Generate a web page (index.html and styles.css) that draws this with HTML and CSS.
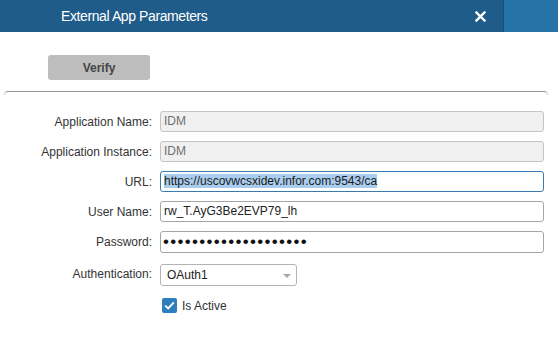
FILE: index.html
```html
<!DOCTYPE html>
<html lang="en">
<head>
  <meta charset="UTF-8">
  <meta name="viewport" content="width=device-width, initial-scale=1.0">
  <title>External App Parameters</title>
  <link rel="stylesheet" href="styles.css">
</head>
<body>

  <div class="dialog">
    <div class="titlebar">
      <div class="title">External App Parameters</div>
      <div class="close">
        <svg width="11" height="11" viewBox="0 0 11 11">
          <path d="M1.5 1.5 L9.5 9.5 M9.5 1.5 L1.5 9.5" stroke="#fff" stroke-width="2.4" stroke-linecap="square"/>
        </svg>
      </div>
      <div class="side"></div>
    </div>

    <div class="toolbar">
      <button class="btn-verify">Verify</button>
    </div>

    <div class="panel">
      <div class="panel-line"></div>

      <div class="form">
        <label class="label">Application Name:</label>
        <div class="field disabled">IDM</div>

        <label class="label">Application Instance:</label>
        <div class="field disabled">IDM</div>

        <label class="label">URL:</label>
        <div class="field focused"><span class="selected">https://uscovwcsxidev.infor.com:9543/ca</span></div>

        <label class="label">User Name:</label>
        <div class="field">rw_T.AyG3Be2EVP79_lh</div>

        <label class="label">Password:</label>
        <div class="field password">&#8226;&#8226;&#8226;&#8226;&#8226;&#8226;&#8226;&#8226;&#8226;&#8226;&#8226;&#8226;&#8226;&#8226;&#8226;&#8226;&#8226;&#8226;&#8226;&#8226;</div>

        <label class="label">Authentication:</label>
        <div class="select-wrap">
          <div class="select">OAuth1<span class="arrow"></span></div>
        </div>

        <div></div>
        <div class="check-row">
          <span class="checkbox">
            <svg width="11" height="9" viewBox="0 0 11 9">
              <path d="M1.2 4.6 L4.2 7.4 L9.8 1.4" fill="none" stroke="#fff" stroke-width="1.9"/>
            </svg>
          </span>
          <span class="check-label">Is Active</span>
        </div>
      </div>
    </div>
  </div>

</body>
</html>
```

FILE: styles.css
```css
body {
  margin: 0;
  font-family: "Liberation Sans", Arial, sans-serif;
  background: #fff;
  color: #333;
}

.dialog {
  width: 558px;
  height: 342px;
  background: #fff;
}

/* title bar */
.titlebar {
  display: flex;
  height: 32px;
  background: #1f5c89;
}

.title {
  flex: 1;
  padding-left: 61px;
  line-height: 32px;
  font-size: 14px;
  letter-spacing: -0.4px;
  color: #fff;
}

.close {
  width: 45px;
  display: flex;
  align-items: center;
  justify-content: center;
  padding-top: 1px;
}

.side {
  width: 54px;
  background: #2673a8;
  border-left: 1px solid #1a5078;
}

/* verify button */
.toolbar {
  padding: 23px 0 0 48px;
}

.btn-verify {
  width: 102px;
  height: 25px;
  border: none;
  border-radius: 3px;
  background: #bdbdbd;
  color: #444;
  font-family: "Liberation Sans", Arial, sans-serif;
  font-size: 12px;
  font-weight: bold;
  padding: 0;
}

/* form panel */
.panel {
  margin: 11px 0 0 4px;
  width: 544px;
}

.panel-line {
  height: 3px;
  border: 1px solid #999;
  border-bottom: none;
  border-radius: 5px 5px 0 0;
  border-left-color: #c8c8c8;
  border-right-color: #c8c8c8;
}

.form {
  display: grid;
  grid-template-columns: 148px 384px;
  column-gap: 8px;
  row-gap: 9px;
  margin-top: 16px;
  align-items: center;
}

.label {
  text-align: right;
  font-size: 12px;
  color: #333;
}

.field {
  box-sizing: border-box;
  height: 21px;
  line-height: 19px;
  padding: 0 3px;
  border: 1px solid #a6a6a6;
  border-radius: 3px;
  font-size: 12px;
  color: #222;
  background: #fff;
  white-space: nowrap;
  overflow: hidden;
}

.field.disabled {
  background: #f0f0f0;
  border-color: #c4c4c4;
  color: #6f6f6f;
}

.field.focused {
  border-color: #3b79b1;
}

.selected {
  background: #a9cdee;
  color: #1a1a1a;
}

.field.password {
  height: 22px;
  font-size: 17px;
  line-height: 19px;
  letter-spacing: 1.3px;
  padding-left: 2px;
  color: #111;
}

.select-wrap {
  margin-top: 2px;
}

.select {
  position: relative;
  box-sizing: border-box;
  width: 137px;
  height: 22px;
  line-height: 20px;
  padding: 0 6px;
  border: 1px solid #b4b4b4;
  border-radius: 3px;
  font-size: 12px;
  color: #222;
}

.arrow {
  position: absolute;
  right: 5px;
  top: 9px;
  border-left: 4px solid transparent;
  border-right: 4px solid transparent;
  border-top: 4px solid #aaa;
}

.check-row {
  display: flex;
  align-items: center;
  gap: 5px;
  margin-top: 3px;
  padding-left: 2px;
}

.checkbox {
  width: 15px;
  height: 15px;
  border-radius: 2px;
  background: #2e7dbd;
  display: flex;
  align-items: center;
  justify-content: center;
}

.check-label {
  font-size: 12px;
  color: #333;
}
```
